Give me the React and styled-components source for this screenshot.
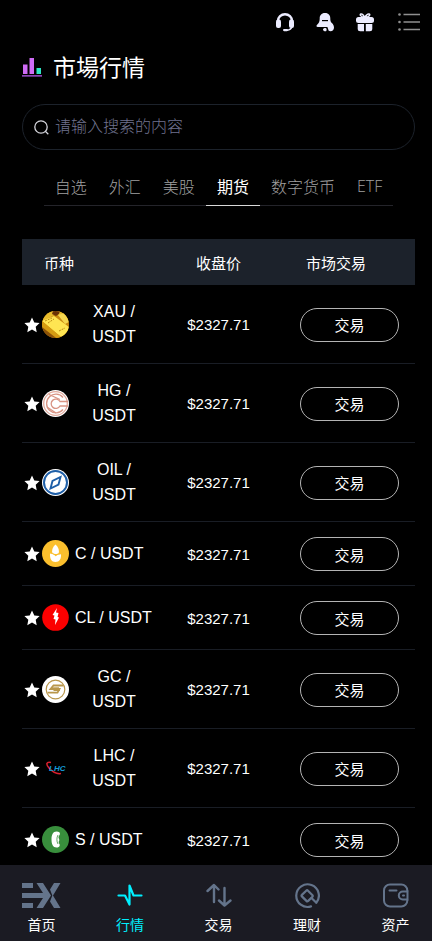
import React, { useState } from "react";
import styled, { createGlobalStyle } from "styled-components";

const GlobalStyle = createGlobalStyle`
  * {
    box-sizing: border-box;
  }
  body {
    margin: 0;
    background: #000;
    color: #fff;
    font-family: "Liberation Sans", "Noto Sans CJK SC", sans-serif;
    font-size: 16px;
  }
  button,
  input {
    font-family: inherit;
  }
`;

const Screen = styled.div`
  display: flex;
  flex-direction: column;
  height: 100vh;
`;

const Scroll = styled.main`
  flex: 1;
  min-height: 0;
  overflow-y: auto;
  scrollbar-width: none;
  padding: 0 17px 0 22px;
`;

const TopBar = styled.div`
  display: flex;
  justify-content: flex-end;
  align-items: center;
  height: 44px;
  gap: 20px;
  margin-right: -6px;
`;

const IconButton = styled.button`
  display: flex;
  padding: 0;
  border: 0;
  background: none;
  color: #ececff;
  margin-left: ${(props) => (props.$spaced ? "3px" : "0")};
`;

const TitleRow = styled.div`
  display: flex;
  align-items: center;
  gap: 11px;
  height: 48px;
`;

const Title = styled.h1`
  margin: 0;
  font-size: 23px;
  font-weight: 400;
  line-height: 32px;
`;

const SearchBox = styled.label`
  display: flex;
  align-items: center;
  gap: 6px;
  height: 46px;
  margin-top: 12px;
  padding: 0 11px;
  border: 1px solid #1c222b;
  border-radius: 23px;
`;

const SearchInput = styled.input`
  flex: 1;
  min-width: 0;
  padding: 0;
  border: 0;
  outline: 0;
  background: none;
  color: #fff;
  font-size: 16px;
  &::placeholder {
    color: #70738f;
    opacity: 1;
    font-weight: 300;
  }
`;

const Tabs = styled.div`
  display: flex;
  width: fit-content;
  margin: 16px auto 0;
  border-bottom: 1px solid #24242a;
`;

const Tab = styled.button`
  height: 40px;
  margin-bottom: -1px;
  padding: 0 11px;
  border: 0;
  border-bottom: 1px solid ${(props) => (props.$active ? "#d8d8d8" : "transparent")};
  background: none;
  color: ${(props) => (props.$active ? "#fff" : "#a0a0a0")};
  font-family: "Open Sans", "Noto Sans CJK SC", sans-serif;
  font-size: 16px;
  font-weight: ${(props) => (props.$active ? 400 : 300)};
`;

const Table = styled.table`
  width: 100%;
  margin-top: 33px;
  border-spacing: 0;
  table-layout: fixed;
`;

const HeadCell = styled.th`
  height: 46px;
  padding: 0 ${(props) => (props.$align === "left" ? "22px" : "0")};
  background: #1c222b;
  font-size: 15px;
  font-weight: 400;
  text-align: ${(props) => props.$align};
`;

const Cell = styled.td`
  padding: 15px 0 14px;
  border-bottom: 1px solid #191d25;
  font-size: 15px;
  text-align: center;
`;

const PairCell = styled(Cell)`
  padding: 14px 0 14px 2px;
  font-size: 16px;
`;

const Pair = styled.div`
  display: flex;
  align-items: center;
`;

const StarButton = styled.button`
  display: flex;
  flex: none;
  margin-right: 2px;
  padding: 1px 0 0;
  border: 0;
  background: none;
`;

const CoinIcon = styled.svg`
  flex: none;
  width: 27px;
  height: 27px;
  margin-right: 6px;
`;

const PairName = styled.span`
  line-height: 25px;
`;

const TradeButton = styled.button`
  width: 75%;
  height: 34px;
  padding: 0;
  border: 1px solid #b4b4b4;
  border-radius: 17px;
  background: none;
  color: #fff;
  font-size: 15px;
  vertical-align: top;
`;

const BottomNav = styled.nav`
  display: flex;
  justify-content: space-between;
  height: 76px;
  padding: 17px 17px 0 22px;
  background: #1b1b23;
`;

const NavItem = styled.a`
  display: flex;
  flex-direction: column;
  align-items: center;
  width: 39px;
  gap: 6px;
  color: ${(props) => (props.$active ? "#00f0ff" : "#fff")};
  font-size: 14px;
  line-height: 20px;
  text-decoration: none;
  svg {
    display: block;
    color: ${(props) => (props.$active ? "#00f0ff" : "#64748b")};
  }
`;

const HeadsetIcon = () => (
  <svg width="20" height="20" viewBox="0 0 20 20">
    <path d="M3 9.500V9a7 6.800 0 0 1 14 0v.5" fill="none" stroke="currentColor" strokeWidth="2.400" />
    <rect x="1" y="7.500" width="5" height="8.500" rx="2" fill="currentColor" />
    <rect x="14" y="7.500" width="5" height="8.500" rx="2" fill="currentColor" />
    <path d="M17 14.500c-.6 2.200-2.300 3.500-5 3.800" fill="none" stroke="currentColor" strokeWidth="1.400" />
    <rect x="8" y="17" width="5" height="2.200" rx="1.100" fill="currentColor" />
  </svg>
);

const BellIcon = () => (
  <svg width="20" height="20" viewBox="0 0 20 20">
    <path
      d="M10 1C6.200 1 4.700 3.600 4.700 6.400c0 3.200-.8 4.600-2.600 6.400-1.100 1.100-.7 2.200.7 2.200H14l4-1.200c.3-1.400-.9-2.300-1.700-3.400-.7-1-1-2.300-1-4C15.300 3.600 13.800 1 10 1Z"
      fill="currentColor"
    />
    <path d="M12 14l3-3.500c2.500.3 4 2.500 4 5 0 2.300-1.500 3.700-3.500 3.700-1.500 0-2.300-.8-2.300-2Z" fill="currentColor" />
    <rect x="7" y="8" width="6" height="1.200" fill="#000" />
    <path d="M8 17.500c0-1 1-1.500 2.500-1.500s1.500 3.300 0 3.300S8 18.500 8 17.500Z" fill="currentColor" />
  </svg>
);

const GiftIcon = () => (
  <svg width="20" height="20" viewBox="0 0 20 20">
    <path
      d="M9.800 5.300C8.500 2.800 7 1.600 5.800 2s-.7 2.900 4 3.300c5-.4 5.600-2.900 4.400-3.300s-2.900.8-4.400 3.300Z"
      fill="none"
      stroke="currentColor"
      strokeWidth="1.500"
    />
    <rect x="1" y="5" width="18" height="6" rx="2.500" fill="currentColor" />
    <path d="M2.700 12H9v7.200H5.200a2.500 2.500 0 0 1-2.500-2.500Z" fill="currentColor" />
    <path d="M10.800 12h6.500v4.700a2.500 2.500 0 0 1-2.500 2.500h-4Z" fill="currentColor" />
  </svg>
);

const MenuIcon = () => (
  <svg width="23" height="18" viewBox="0 0 23 18">
    <g stroke="#8f8f8f" strokeWidth="1.400">
      <path d="M5.500 1.500H22M5.500 9H22M5.500 16.500H22" />
    </g>
    <g fill="#8f8f8f">
      <circle cx="1.500" cy="1.500" r="1.300" />
      <circle cx="1.500" cy="9" r="1.300" />
      <circle cx="1.500" cy="16.500" r="1.300" />
    </g>
  </svg>
);

const ChartIcon = () => (
  <svg width="20" height="22" viewBox="0 0 20 22">
    <rect x="1" y="7.500" width="4.500" height="9.500" fill="#cf6bf5" />
    <rect x="7.500" y="1" width="4.500" height="16" fill="#cf6bf5" />
    <rect x="14.500" y="11" width="4.500" height="6" fill="#2ee6c5" />
    <rect x="0" y="18" width="20" height="1.700" fill="#8a45b5" />
  </svg>
);

const SearchIcon = () => (
  <svg width="15" height="15" viewBox="0 0 15 15" fill="none" stroke="#d5d5dc" strokeWidth="1.300">
    <circle cx="7" cy="7" r="6.200" />
    <path d="M11.300 11.300l3 2.900" />
  </svg>
);

const StarIcon = () => (
  <svg width="16" height="16" viewBox="0 0 16 16">
    <path
      d="M8 .5l2.300 4.900 5.300.7-3.900 3.700 1 5.400L8 12.600l-4.700 2.600 1-5.400L.4 6.100l5.300-.7Z"
      fill="#fff"
    />
  </svg>
);

const coinArt = {
  XAU: (
    <>
      <clipPath id="gold-clip">
        <circle cx="13.500" cy="13.500" r="13.500" />
      </clipPath>
      <g clipPath="url(#gold-clip)">
        <rect width="27" height="27" fill="#c98a10" />
        <path d="M0 0h27v10L14 3 0 11Z" fill="#e8bc2c" />
        <path d="M11 0h7l-1 3-3 2-4-2Z" fill="#6a3205" />
        <path d="M16 4l7-2 4 9-4 2Z" fill="#f5d750" />
        <path d="M0 10L12 5l15 11v6l-8 4Z" fill="#ffe552" />
        <path d="M0 10l19 16-3 2L0 17Z" fill="#d49b12" />
        <path d="M0 16l14 11H0Z" fill="#8c5207" />
        <path d="M3 10l7-3M6 12l6-4M17 20l6-3" stroke="#b98a14" strokeWidth="1" strokeDasharray="2 1" />
      </g>
    </>
  ),
  HG: (
    <>
      <circle cx="13.500" cy="13.500" r="13.500" fill="#fff" />
      <g fill="none" stroke="#d99585" strokeWidth="1.300">
        <circle cx="13.500" cy="13.500" r="11.800" stroke="#e2aa9d" />
        <path d="M21 7.500A9.300 9.300 0 1 0 21 19.500" />
        <path d="M26 11.500h-8a4.700 4.700 0 1 0 0 4.500h8" />
        <path d="M7 4.500l11 5M5 17l9 6" />
      </g>
    </>
  ),
  OIL: (
    <>
      <circle cx="13.500" cy="13.500" r="13.500" fill="#fff" />
      <circle cx="13.500" cy="13.500" r="11.500" fill="none" stroke="#1e5fa8" strokeWidth="2" />
      <path d="M18.500 8l-2 7.500-8 4 2-7.500Z" fill="none" stroke="#1e5fa8" strokeWidth="1.900" />
    </>
  ),
  C: (
    <>
      <circle cx="13.500" cy="13.500" r="13.500" fill="#fbbf2d" />
      <path d="M13.500 4.500c3 2.500 4.200 6 3 9.500h-6c-1.200-3.500 0-7 3-9.500Z" fill="#fff" />
      <path d="M8 13.500c2.500.2 4.500 1.300 5.700 2.800 1.200-1.300 2.800-2 5.300-2 .4 4.500-1.500 7.700-5.500 7.700S7.700 18.500 8 13.500Z" fill="#fff" />
      <path d="M8.500 12.800c2 .3 4 1.300 5.200 2.600 1.200-1.300 3-1.800 4.800-1.800" fill="none" stroke="#fbbf2d" strokeWidth="1" />
    </>
  ),
  CL: (
    <>
      <circle cx="13.500" cy="13.500" r="13.300" fill="#fb0000" />
      <path d="M15 4l-1 4.500 2.500.5-1 4 1.500.5-4 7.500.5-5.500-2-.5 1-3.500-2-.5Z" fill="#fff" />
    </>
  ),
  GC: (
    <>
      <circle cx="13.500" cy="13.500" r="13.500" fill="#fff" />
      <g fill="none" stroke="#b9974c">
        <circle cx="13.500" cy="13.500" r="9.300" strokeWidth="1.200" />
        <path d="M21.500 9.500H11.500L8.500 13h9l-2 3.700H5.500" strokeWidth="1.800" />
        <path d="M11.500 14.500h6.500M10 11.800h7" strokeWidth="1" />
      </g>
    </>
  ),
  LHC: (
    <>
      <path
        d="M9 7.500C4 6.500 3.800 9.500 7 13c3.300 3.600 8 6.200 12 5.500"
        fill="none"
        stroke="#d61f2e"
        strokeWidth="1.500"
      />
      <text
        x="7"
        y="16"
        fill="#159bd7"
        fontFamily="Liberation Sans, sans-serif"
        fontSize="8"
        fontWeight="700"
        fontStyle="italic"
      >
        LHC
      </text>
    </>
  ),
  S: (
    <>
      <circle cx="13.500" cy="13.500" r="13.500" fill="#388e3c" />
      <path
        d="M14.500 5.500c2.500 0 4 1.200 3.300 3-.5 1.300-1.300 1.800-1.300 2.800 0 1.200.8 1.500.8 2.700s-.8 1.500-.6 2.500c.2 1.200 1.300 1.500 1 3-.3 1.400-1.500 2-3.200 2-3.500 0-5-3.500-5-8s1.500-8 5-8Z"
        fill="#fff"
      />
      <path d="M16 9c-1.500 2.500-1.500 6.500 0 9" fill="none" stroke="#388e3c" strokeWidth=".8" />
    </>
  ),
};

const HomeIcon = () => (
  <svg width="39" height="27" viewBox="0 0 39 27" fill="currentColor">
    <path d="M0 1h11v5H0ZM0 21h11v5H0Z" />
    <path d="M14.500 1H21l8 12.500L21 26h-6.500l6.500-10H0v-5h21Z" />
    <path d="M32 1h6.500L31 13.500 38.500 26H32l-4-6.500 2.300-6L28 7.500Z" />
  </svg>
);

const PulseIcon = () => (
  <svg width="26" height="27" viewBox="0 0 26 27">
    <path
      d="M1.500 13.500H8l4.500 9V3.500l4 10h8"
      fill="none"
      stroke="currentColor"
      strokeWidth="2.200"
      strokeLinecap="round"
      strokeLinejoin="round"
    />
  </svg>
);

const SwapIcon = () => (
  <svg width="26" height="27" viewBox="0 0 26 27">
    <path
      d="M8 20V3.500M1.500 9L8 3l4.500 4.500M18.500 6v16.500M13 18.500l5.500 5 6-5"
      fill="none"
      stroke="currentColor"
      strokeWidth="2.400"
      strokeLinecap="round"
      strokeLinejoin="round"
    />
  </svg>
);

const FinanceIcon = () => (
  <svg width="26" height="27" viewBox="0 0 26 27">
    <g fill="none" stroke="currentColor" strokeWidth="2.200" strokeLinecap="round" strokeLinejoin="round">
      <path d="M17 24.400A11.300 11.300 0 1 1 22.300 20.800L17.500 16" />
      <path d="M12.200 8.700q.9-.9 1.800 0l4.500 4.500q.7.800 0 1.500l-4.300 4.200q-.9.900-1.800 0l-4.500-4.500q-.8-.8 0-1.500Z" />
    </g>
  </svg>
);

const WalletIcon = () => (
  <svg width="26" height="27" viewBox="0 0 26 27">
    <g fill="none" stroke="currentColor" strokeWidth="2" strokeLinecap="round">
      <path d="M24.300 9V8.500a6 6 0 0 0-6-6H7a6 6 0 0 0-6 6v10a6 6 0 0 0 6 6h11.300a6 6 0 0 0 6-6V18" />
      <path d="M24.500 9.500h-4.700a4 4 0 0 0 0 8h4.700ZM6.500 8.500h7" />
      <path d="M20 13.500h1" />
    </g>
  </svg>
);

const tabs = ["自选", "外汇", "美股", "期货", "数字货币", "ETF"];

const coins = ["XAU", "HG", "OIL", "C", "CL", "GC", "LHC", "S"];

const navItems = [
  { label: "首页", Icon: HomeIcon },
  { label: "行情", Icon: PulseIcon },
  { label: "交易", Icon: SwapIcon },
  { label: "理财", Icon: FinanceIcon },
  { label: "资产", Icon: WalletIcon },
];

const App = () => {
  const [activeTab, setActiveTab] = useState("期货");
  return (
    <>
      <GlobalStyle />
      <Screen>
        <Scroll>
          <TopBar>
            <IconButton>
              <HeadsetIcon />
            </IconButton>
            <IconButton>
              <BellIcon />
            </IconButton>
            <IconButton>
              <GiftIcon />
            </IconButton>
            <IconButton $spaced>
              <MenuIcon />
            </IconButton>
          </TopBar>
          <TitleRow>
            <ChartIcon />
            <Title>市場行情</Title>
          </TitleRow>
          <SearchBox htmlFor="search">
            <SearchIcon />
            <SearchInput id="search" type="text" placeholder="请输入搜索的内容" />
          </SearchBox>
          <Tabs>
            {tabs.map((tab) => (
              <Tab key={tab} $active={tab === activeTab} onClick={() => setActiveTab(tab)}>
                {tab}
              </Tab>
            ))}
          </Tabs>
          <Table>
            <thead>
              <tr>
                <HeadCell $align="left">币种</HeadCell>
                <HeadCell $align="center">收盘价</HeadCell>
                <HeadCell $align="left">市场交易</HeadCell>
              </tr>
            </thead>
            <tbody>
              {coins.map((coin) => (
                <tr key={coin}>
                  <PairCell>
                    <Pair>
                      <StarButton>
                        <StarIcon />
                      </StarButton>
                      <CoinIcon viewBox="0 0 27 27">{coinArt[coin]}</CoinIcon>
                      <PairName>{`${coin} / USDT`}</PairName>
                    </Pair>
                  </PairCell>
                  <Cell>$2327.71</Cell>
                  <Cell>
                    <TradeButton>交易</TradeButton>
                  </Cell>
                </tr>
              ))}
            </tbody>
          </Table>
        </Scroll>
        <BottomNav>
          {navItems.map(({ label, Icon }) => (
            <NavItem key={label} href="#" $active={label === "行情"}>
              <Icon />
              {label}
            </NavItem>
          ))}
        </BottomNav>
      </Screen>
    </>
  );
};

export default App;
